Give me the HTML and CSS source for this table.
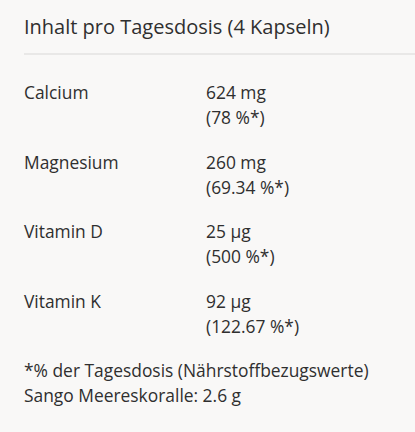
FILE: index.html
```html
<!DOCTYPE html>
<html lang="de">
<head>
<meta charset="utf-8">
<link rel="stylesheet" href="styles.css">
</head>
<body>
<section class="panel">
  <h2 class="title">Inhalt pro Tagesdosis (4 Kapseln)</h2>
  <div class="rows">
    <div class="row"><div class="name">Calcium</div><div class="val">624 mg<br>(78 %*)</div></div>
    <div class="row"><div class="name">Magnesium</div><div class="val">260 mg<br>(69.34 %*)</div></div>
    <div class="row"><div class="name">Vitamin D</div><div class="val">25 µg<br>(500 %*)</div></div>
    <div class="row"><div class="name">Vitamin K</div><div class="val">92 µg<br>(122.67 %*)</div></div>
  </div>
  <p class="note">*% der Tagesdosis (Nährstoffbezugswerte)<br>Sango Meereskoralle: 2.6 g</p>
</section>
</body>
</html>
```
FILE: styles.css
```css
html, body { margin: 0; padding: 0; background: #f9f8f7; }
body { font-family: "Open Sans", sans-serif; color: #2f2f2f; }
.panel { padding: 13px 0 0 24px; }
.title { font-size: 20px; font-weight: 400; margin: 0; line-height: 28px; padding-bottom: 12px; border-bottom: 2px solid #e9e8e7; }
.rows { padding-top: 25px; }
.row { display: flex; font-size: 17.4px; line-height: 25px; margin-bottom: 19.5px; }
.name { width: 182px; }
.note { margin: 0; font-size: 17.4px; line-height: 25px; }
```
